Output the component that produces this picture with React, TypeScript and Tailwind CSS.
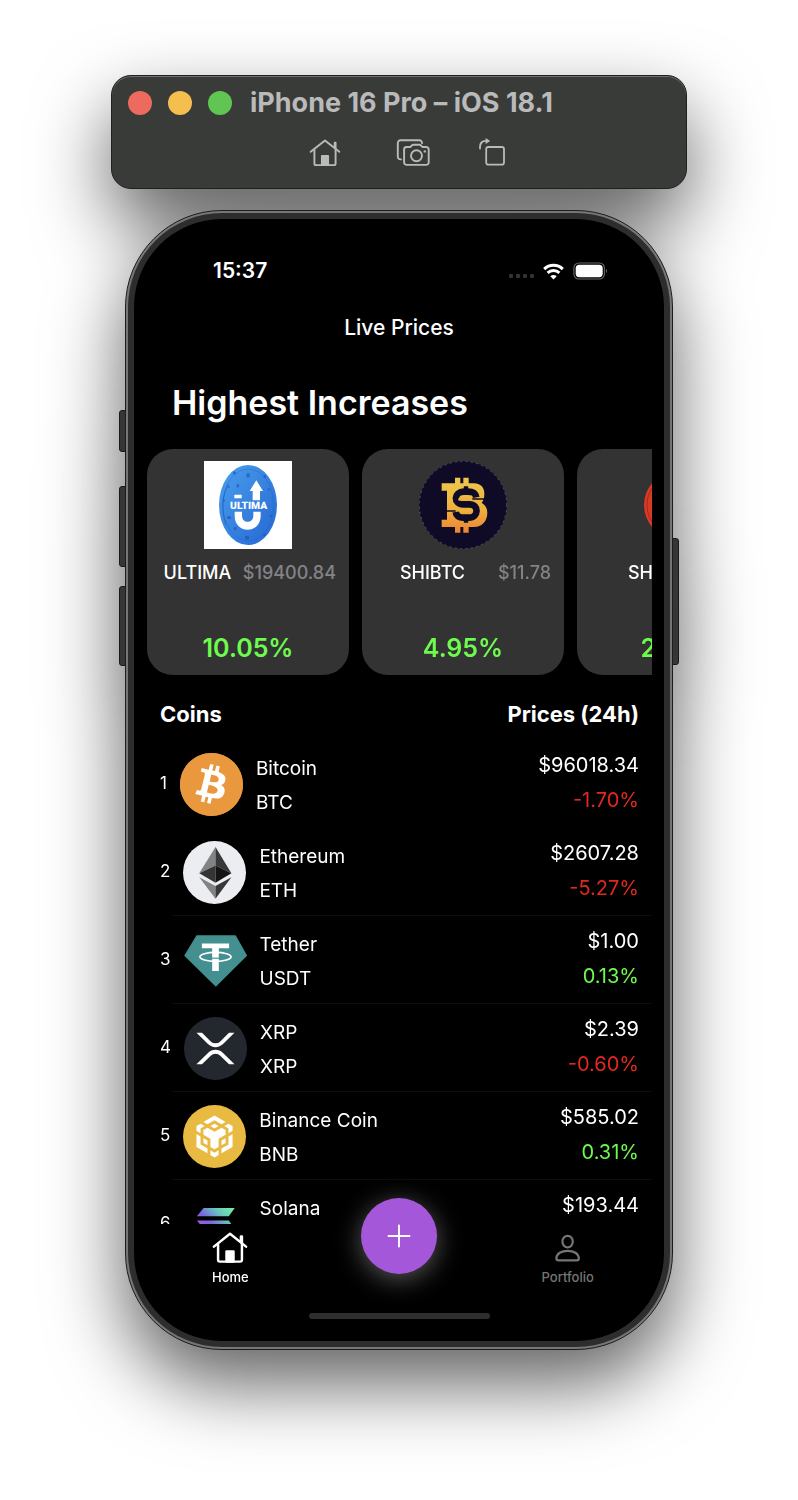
import React from "react";
import { SiBitcoin } from "react-icons/si";

type Coin = {
  rank: number;
  name: string;
  symbol: string;
  price: string;
  change: string;
  logo: React.ReactNode;
};

type Mover = {
  symbol: string;
  price: string;
  change: string;
  logo: React.ReactNode;
};

function HouseIcon({ className, stroke }: { className: string; stroke: number }) {
  return (
    <svg viewBox="0 0 32 28" className={className} fill="none" stroke="currentColor" strokeWidth={stroke} strokeLinecap="round" strokeLinejoin="round" aria-hidden="true">
      <path d="M1.7 12.8 16 1.4l14.3 11.4" />
      <path d="M5.4 10.8V24.5a1.6 1.6 0 0 0 1.6 1.6h18a1.6 1.6 0 0 0 1.6-1.6V3.8h-.9v4.6" />
      <path d="M12.9 17h6.2v9h-6.2z" fill="currentColor" />
    </svg>
  );
}

function ScreenshotIcon() {
  return (
    <svg viewBox="-1 0 36 30" className="h-[30px] w-9" fill="none" stroke="currentColor" strokeWidth="1.9" strokeLinecap="round" strokeLinejoin="round" aria-hidden="true">
      <path d="M5 21.4H4.400a2.600 2.600 0 0 1-2.600-2.600V4.900a2.600 2.600 0 0 1 2.600-2.600H23.400a2.600 2.600 0 0 1 2.600 2.800" />
      <path d="M10.600 9h3.200c.5 0 .9-.2 1.200-.6l.9-1.100c.4-.4.8-.6 1.300-.6h6.400c.5 0 .9.2 1.300.6l.9 1.100c.3.4.7.6 1.200.6h3.200a2.500 2.500 0 0 1 2.500 2.500v12.900a2.500 2.500 0 0 1-2.500 2.500H10.600a2.500 2.500 0 0 1-2.500-2.500V11.500A2.500 2.500 0 0 1 10.600 9z" />
      <circle cx="20.5" cy="17.8" r="5.500" />
      <circle cx="28.8" cy="13.400" r="1.200" fill="currentColor" stroke="none" />
    </svg>
  );
}

function RotateIcon() {
  return (
    <svg viewBox="0 0 28 30" className="h-[30px] w-7" fill="none" stroke="currentColor" strokeWidth="1.8" strokeLinecap="round" strokeLinejoin="round" aria-hidden="true">
      <rect x="8.2" y="9" width="17.800" height="17.600" rx="2.200" />
      <path d="M2 10.600V9C2 5.200 4.200 2.900 7.800 2.900" />
      <path d="M7.600 0v5.900l4.600-2.900z" fill="currentColor" stroke="none" />
    </svg>
  );
}

function PersonIcon() {
  return (
    <svg viewBox="0 -1 36 32" className="h-8 w-9" fill="none" stroke="currentColor" strokeWidth="2.2" strokeLinejoin="round" aria-hidden="true">
      <ellipse cx="17.600" cy="8.600" rx="5.200" ry="5.800" />
      <path d="M6.400 25.500C6.400 20.500 11.600 17.800 17.600 17.800s11.200 2.700 11.200 7.700c0 1.300-.7 1.800-2 1.800H8.400c-1.300 0-2-.5-2-1.800z" />
    </svg>
  );
}

function WifiIcon() {
  return (
    <svg viewBox="0 0 21 17" className="h-[17px] w-[21px]" fill="none" stroke="currentColor" strokeWidth="2.900" aria-hidden="true">
      <path d="M1.200 6.100a13.300 13.300 0 0 1 18.600 0" />
      <path d="M4.600 9.900a8.500 8.500 0 0 1 11.800 0" />
      <path d="M10.500 16.600 7.300 13.300a4.600 4.600 0 0 1 6.400 0z" fill="currentColor" stroke="none" />
    </svg>
  );
}

function BatteryIcon() {
  return (
    <svg viewBox="0 0 35 18" className="h-[18px] w-[35px]" aria-hidden="true">
      <rect x=".9" y="1" width="30.500" height="16" rx="5" fill="none" stroke="#6b6b6b" strokeWidth="1.100" />
      <rect x="2.700" y="2.800" width="27" height="12.400" rx="3.600" fill="#fff" />
      <path d="M33 6.800c1.400.7 1.400 3.700 0 4.400z" fill="#6b6b6b" />
    </svg>
  );
}

function UltimaLogo() {
  return (
    <svg viewBox="192 64 264 264" className="size-[88px]" aria-hidden="true">
      <defs>
        <linearGradient id="ultima" x1="0" y1="0" x2="1" y2="1">
          <stop offset="0" stopColor="#4aa0ee" />
          <stop offset="1" stopColor="#2466d2" />
        </linearGradient>
      </defs>
      <rect x="192" y="64" width="264" height="264" fill="#fff" />
      <ellipse cx="324" cy="196" rx="87" ry="120" fill="url(#ultima)" />
      <ellipse cx="325" cy="196" rx="76" ry="108" fill="none" stroke="#1f5cc0" strokeWidth="2" opacity=".5" />
      <path d="M258 255c-14-40-14-85 8-122" fill="none" stroke="#1d54b4" strokeWidth="3" opacity=".6" />
      <g fill="#1b4fae" opacity=".6">
        <rect x="279" y="96" width="8" height="8" />
        <rect x="320" y="101" width="9" height="12" />
        <rect x="290" y="134" width="7" height="9" />
        <rect x="264" y="140" width="5" height="5" />
        <rect x="262" y="229" width="10" height="9" />
        <rect x="282" y="263" width="7" height="9" />
        <rect x="315" y="289" width="12" height="10" />
        <rect x="370" y="283" width="7" height="6" />
        <rect x="383" y="146" width="6" height="6" />
        <rect x="389" y="226" width="6" height="6" />
        <rect x="371" y="107" width="7" height="7" />
        <rect x="250" y="180" width="5" height="6" />
      </g>
      <path d="M284 216v12c0 56 78 56 78 0v-12h-22v12c0 24-34 24-34 0v-12z" fill="#fff" />
      <path d="M283 165h22v11h-22zM349 122l20 32h-9v28h-22v-28h-9z" fill="#fff" />
      <text x="326" y="209" textAnchor="middle" fontSize="31" className="fill-white font-[Roboto,sans-serif] font-black" textRendering="geometricPrecision">
        ULTIMA
      </text>
    </svg>
  );
}

function ShibtcLogo() {
  return (
    <svg viewBox="175 64 264 264" className="size-[88px]" aria-hidden="true">
      <defs>
        <linearGradient id="shibtc" x1="0" y1="0" x2="0" y2="1">
          <stop offset="0" stopColor="#edc94a" />
          <stop offset=".55" stopColor="#eeb23e" />
          <stop offset="1" stopColor="#ec8432" />
        </linearGradient>
      </defs>
      <circle cx="307" cy="196" r="132" fill="#0f0a26" />
      <circle cx="307" cy="196" r="131" fill="none" stroke="#8f8fa0" strokeWidth="1.500" strokeDasharray="6 10" />
      <path
        fill="url(#shibtc)"
        d="M283 114h16v17h9v-17h16v17h16c22 0 32 15 31 33 0 12-3 20-8 25 11 7 17 16 17 30 0 26-16 42-40 43h-16v17h-16v-17h-9v17h-16v-17h-40v-22h16v-87h-16v-22h40z"
      />
      <g fill="none" stroke="#0f0a26">
        <path strokeWidth="20" d="M347 173c-3-14-12-17-25-17h-12c-32 0-32 38-2 38h18c30 0 28 40-1 40h-16c-14 0-22-5-24-17" />
        <path strokeWidth="13" d="M316 140v14M316 236v13" />
        <path strokeWidth="5" d="M333 178h41M255 214h30" />
      </g>
      <path d="M297 178.500h34M297 211h34" stroke="#eeb23e" strokeWidth="9" strokeLinecap="round" />
    </svg>
  );
}

function RedCoinLogo() {
  return (
    <svg viewBox="0 0 88 88" className="size-[88px]" aria-hidden="true">
      <circle cx="44" cy="44" r="34" fill="#d93a26" />
      <circle cx="44" cy="44" r="31" fill="none" stroke="#a82a1a" />
    </svg>
  );
}

function BitcoinLogo() {
  return (
    <span className="relative block size-[63px] rounded-full bg-[#e9983e] text-[#e9983e]">
      <span className="absolute inset-2 rounded-full bg-white" />
      <SiBitcoin className="relative size-full" aria-hidden="true" />
    </span>
  );
}

function EthereumLogo() {
  return (
    <svg viewBox="127 451 190 190" className="size-[63px]" aria-hidden="true">
      <circle cx="222" cy="546" r="95" fill="#ecedf0" />
      <path fill="#828385" d="M225 469 176 548l49-23zM176 560l49 65v-38z" />
      <path fill="#383838" d="m225 469 48 79-48-23zM273 560l-48 65v-38z" />
      <path fill="#343434" d="m176 548 49-23v52z" />
      <path fill="#141414" d="m273 548-48-23v52z" />
    </svg>
  );
}

function TetherLogo() {
  return (
    <svg viewBox="128 25 190 190" className="size-[63px]" aria-hidden="true">
      <path fill="#448f90" stroke="#448f90" strokeWidth="4" strokeLinejoin="round" d="M167 46h116l33 59-92 91-93-91z" />
      <path fill="#fff" d="M182 69h82v14h-31v69h-20V83h-31z" />
      <ellipse cx="223" cy="109" rx="47" ry="13.500" fill="none" stroke="#fff" strokeWidth="5" />
      <path d="M210 113h26" stroke="#448f90" strokeWidth="3.500" />
    </svg>
  );
}

function XrpLogo() {
  return (
    <svg viewBox="0 0 190 190" className="size-[63px]" aria-hidden="true">
      <circle cx="95" cy="95" r="95" fill="#23282f" />
      <path
        transform="translate(37.500 47.500) scale(.2246)"
        fill="#fff"
        d="M437 0h74L357 152.480c-55.770 55.190-146.190 55.190-202 0L.94 0H75l117 115.830a91.110 91.110 0 0 0 127.910 0zM74.050 424H0l155-153.420c55.770-55.190 146.190-55.190 202 0L512 424h-74L320 308.170a91.110 91.110 0 0 0-127.910 0z"
      />
    </svg>
  );
}

function BnbLogo() {
  return (
    <svg viewBox="0 0 190 190" className="size-[63px]" aria-hidden="true">
      <circle cx="95" cy="95" r="95" fill="#e8ba41" />
      <path
        transform="translate(32 32) scale(5.250)"
        fill="#fff"
        d="M5.631 3.676 12.001 0l6.367 3.676-2.340 1.358L12 2.716 7.972 5.034l-2.340-1.358Zm12.737 4.636-2.340-1.358L12 9.272 7.972 6.954l-2.340 1.358v2.716l4.026 2.318v4.636L12 19.341l2.341-1.359v-4.636l4.027-2.318V8.312Zm0 7.352v-2.716l-2.340 1.358v2.716l2.340-1.358Zm1.663.96-4.027 2.318v2.717l6.368-3.677V10.630l-2.340 1.358v4.636Zm-2.340-10.630 2.340 1.358v2.716l2.341-1.358V5.994l-2.340-1.358-2.342 1.358ZM9.657 19.926v2.716L12 24l2.341-1.358v-2.716l-2.340 1.358-2.342-1.358Zm-4.027-4.262 2.341 1.358v-2.716l-2.340-1.358v2.716Zm4.027-9.670L12 7.352l2.341-1.358-2.340-1.358-2.342 1.358Zm-5.690 1.358L6.310 5.994 3.968 4.636 1.627 5.994v2.716l2.341 1.358V7.352Zm0 4.636L1.627 10.630v7.353L7.996 21.660v-2.717l-4.028-2.318v-4.637Z"
      />
    </svg>
  );
}

function SolanaLogo() {
  return (
    <svg viewBox="129 67 190 190" className="size-[63px]" aria-hidden="true">
      <defs>
        <linearGradient id="solana" gradientUnits="userSpaceOnUse" x1="275" y1="112" x2="185" y2="205">
          <stop offset="0" stopColor="#6fefa6" />
          <stop offset=".3" stopColor="#68c4bf" />
          <stop offset=".6" stopColor="#7a66e0" />
          <stop offset="1" stopColor="#c74cf0" />
        </linearGradient>
      </defs>
      <path fill="url(#solana)" d="M188 112h94l-18 25h-96zM168 150h96l18 25h-94zM188 188h94l-18 25h-96z" />
    </svg>
  );
}

const movers: Mover[] = [
  { symbol: "ULTIMA", price: "$19400.84", change: "10.05%", logo: <UltimaLogo /> },
  { symbol: "SHIBTC", price: "$11.78", change: "4.95%", logo: <ShibtcLogo /> },
  { symbol: "SHIB", price: "$2.39", change: "2.41%", logo: <RedCoinLogo /> },
];

const coins: Coin[] = [
  { rank: 1, name: "Bitcoin", symbol: "BTC", price: "$96018.34", change: "-1.70%", logo: <BitcoinLogo /> },
  { rank: 2, name: "Ethereum", symbol: "ETH", price: "$2607.28", change: "-5.27%", logo: <EthereumLogo /> },
  { rank: 3, name: "Tether", symbol: "USDT", price: "$1.00", change: "0.13%", logo: <TetherLogo /> },
  { rank: 4, name: "XRP", symbol: "XRP", price: "$2.39", change: "-0.60%", logo: <XrpLogo /> },
  { rank: 5, name: "Binance Coin", symbol: "BNB", price: "$585.02", change: "0.31%", logo: <BnbLogo /> },
  { rank: 6, name: "Solana", symbol: "SOL", price: "$193.44", change: "-2.18%", logo: <SolanaLogo /> },
];

function SimulatorBar() {
  return (
    <header className="w-full max-w-[576px] rounded-[20px] border border-[#1f201f] bg-[#393b39] pt-[11px] pb-[17px] text-[#b9bab9] shadow-[inset_0_1px_0_#6f706f]">
      <div className="flex h-8 items-center pl-4">
        <div className="flex gap-4">
          <button aria-label="Close" className="size-6 rounded-full bg-[#ec6a5e]" />
          <button aria-label="Minimize" className="size-6 rounded-full bg-[#f4bf4f]" />
          <button aria-label="Zoom" className="size-6 rounded-full bg-[#61c554]" />
        </div>
        <h1 className="ml-[18px] text-[27px] leading-8 font-bold whitespace-nowrap">iPhone 16 Pro – iOS 18.1</h1>
      </div>
      <div className="mt-4 flex h-9 items-center pl-[169px]">
        <button aria-label="Home screen" className="flex w-[88px] justify-center">
          <HouseIcon className="h-7 w-8" stroke={1.9} />
        </button>
        <button aria-label="Take screenshot" className="flex w-[88px] justify-center">
          <ScreenshotIcon />
        </button>
        <button aria-label="Rotate" className="flex w-[70px] justify-center">
          <RotateIcon />
        </button>
      </div>
    </header>
  );
}

function StatusBar() {
  return (
    <div className="flex h-[30px] items-center justify-between pr-14 pl-[79px]">
      <time className="text-[21px] font-semibold">15:37</time>
      <div className="flex items-center gap-[9px]">
        <span className="mt-2.5 flex gap-[3px]">
          <i className="size-1 rounded-[1px] bg-[#333]" />
          <i className="size-1 rounded-[1px] bg-[#333]" />
          <i className="size-1 rounded-[1px] bg-[#333]" />
          <i className="size-1 rounded-[1px] bg-[#333]" />
        </span>
        <WifiIcon />
        <BatteryIcon />
      </div>
    </div>
  );
}

function MoverCard({ mover }: { mover: Mover }) {
  return (
    <li className="flex h-[226px] w-[202px] shrink-0 flex-col items-center rounded-[26px] bg-[#333] px-[13px] pt-3 pb-[9px]">
      {mover.logo}
      <div className="mt-3 flex w-full text-[18px] leading-6">
        <span className="flex-1" />
        <span className="mr-2 font-medium">{mover.symbol}</span>
        <span className="flex-1" />
        <span className="font-medium text-[#838388]">{mover.price}</span>
      </div>
      <p className="mt-auto text-[25px] leading-9 font-semibold text-[#6dfb4e]">{mover.change}</p>
    </li>
  );
}

function CoinRow({ coin }: { coin: Coin }) {
  const falling = coin.change.startsWith("-");
  return (
    <tr className="relative h-[88px] after:absolute after:right-0 after:bottom-0 after:left-[25px] after:h-px after:bg-[#0d0d0d] first:after:hidden">
      <td className="pl-[13px]">
        <div className="flex items-center gap-[13px]">
          <span className="text-[17px]">{coin.rank}</span>
          {coin.logo}
          <div className="pt-1 text-[19px] leading-[26px]">
            <p className="mb-2">{coin.name}</p>
            <p>{coin.symbol}</p>
          </div>
        </div>
      </td>
      <td className="pr-[13px] pb-1 text-right text-[20px] leading-[26px]">
        <p className="mb-[9px]">{coin.price}</p>
        <p className={falling ? "text-[#e2281e]" : "text-[#6dfb4e]"}>{coin.change}</p>
      </td>
    </tr>
  );
}

function TabBar() {
  return (
    <nav className="relative z-10 grid h-[88px] grid-cols-3 px-3 text-[13px] leading-4 font-medium">
      <a href="#home" className="flex flex-col items-center pt-2">
        <HouseIcon className="h-8 w-9" stroke={2.2} />
        <span className="mt-[5px]">Home</span>
      </a>
      <div className="flex justify-center">
        <button aria-label="Add" className="-mt-[26px] flex size-[76px] items-center justify-center rounded-full bg-[#a557d9] shadow-[0_5px_26px_rgba(255,255,255,0.35)]">
          <svg viewBox="0 0 24 24" className="size-6" stroke="#fff" strokeWidth="1.900" strokeLinecap="round" aria-hidden="true">
            <path d="M12 1.500v21M1.500 12h21" />
          </svg>
        </button>
      </div>
      <a href="#portfolio" className="flex flex-col items-center pt-2 text-[#757575]">
        <PersonIcon />
        <span className="mt-[5px]">Portfolio</span>
      </a>
    </nav>
  );
}

function Phone() {
  return (
    <div className="relative w-full max-w-[548px]">
      <span className="absolute top-[200px] -left-1.5 h-[42px] w-2 rounded-l-[3px] border border-[#1a1a1a] bg-[#363636]" />
      <span className="absolute top-[276px] -left-1.5 h-[81px] w-2 rounded-l-[3px] border border-[#1a1a1a] bg-[#363636]" />
      <span className="absolute top-[376px] -left-1.5 h-[80px] w-2 rounded-l-[3px] border border-[#1a1a1a] bg-[#363636]" />
      <span className="absolute top-[328px] -right-1.5 h-[127px] w-2 rounded-r-[3px] border border-[#1a1a1a] bg-[#363636]" />
      <div className="relative rounded-[97px] border border-[#1c1c1c] bg-[#767676] p-[2px]">
        <div className="rounded-[94px] bg-[#2d2d2d] p-1.5">
          <main className="overflow-hidden rounded-[88px] bg-black pt-[37px] pb-[22px] text-white">
            <StatusBar />
            <h2 className="mt-7 text-center text-[21px] leading-7 font-medium">Live Prices</h2>
            <div className="mr-3 ml-[13px] h-[882px] overflow-x-hidden overflow-y-auto pt-[39px] [scrollbar-width:none]">
              <h3 className="pl-[25px] text-[34px] leading-[44px] font-semibold">Highest Increases</h3>
              <ul className="mt-6 flex gap-[13px] overflow-x-auto [scrollbar-width:none]">
                {movers.map((m) => (
                  <MoverCard key={m.symbol} mover={m} />
                ))}
              </ul>
              <table className="mt-3 w-full border-collapse">
                <thead>
                  <tr className="h-[53px] text-[22px] leading-7">
                    <th className="pl-[13px] text-left font-bold">Coins</th>
                    <th className="pr-[13px] text-right font-bold">Prices (24h)</th>
                  </tr>
                </thead>
                <tbody>
                  {coins.map((c) => (
                    <CoinRow key={c.rank} coin={c} />
                  ))}
                </tbody>
              </table>
            </div>
            <TabBar />
            <div className="mx-auto mt-px h-1.5 w-[181px] rounded-full bg-[#2e2e2e]" />
          </main>
        </div>
      </div>
    </div>
  );
}

export default function App() {
  return (
    <div className="flex min-h-screen flex-col overflow-hidden bg-white pt-[75px] pb-[150px] font-[Inter,sans-serif]">
      <div className="flex flex-col items-center gap-[21px] drop-shadow-[0_34px_38px_rgba(0,0,0,0.62)]">
        <SimulatorBar />
        <Phone />
      </div>
    </div>
  );
}
